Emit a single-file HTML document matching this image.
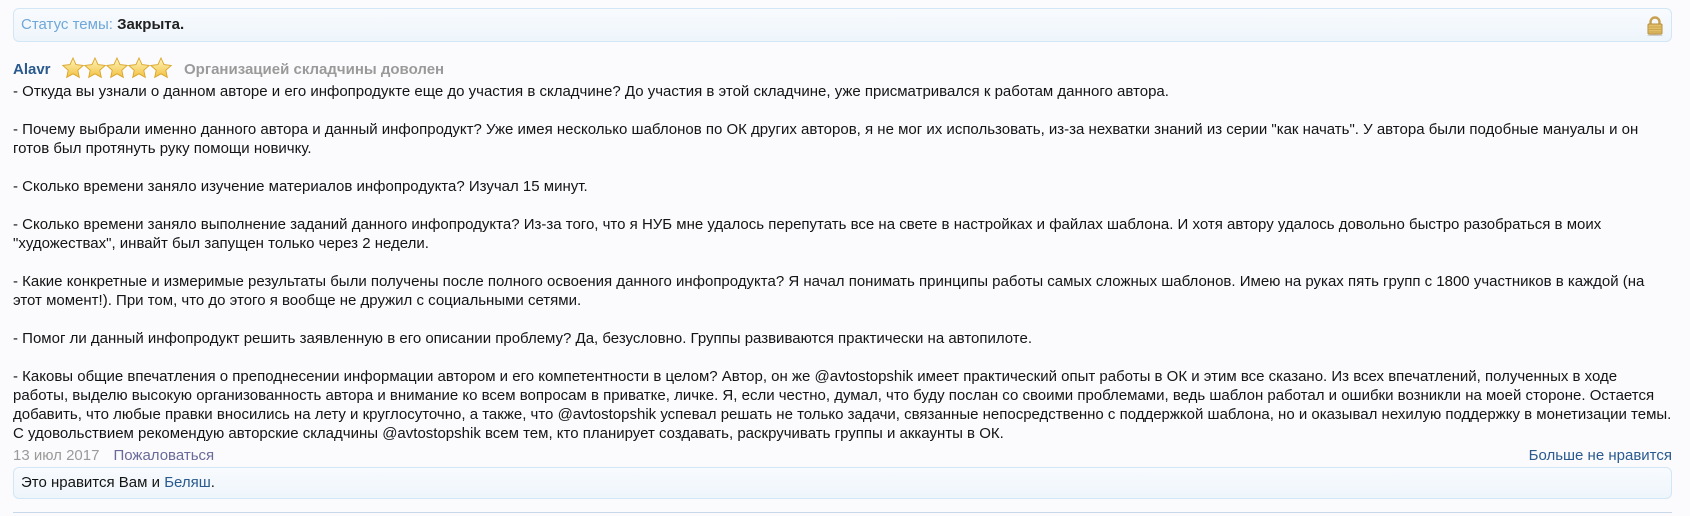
<!DOCTYPE html>
<html><head><meta charset="utf-8"><style>
body{margin:0;background:#fbfbfd;font-family:"Liberation Sans",Arial,sans-serif;font-size:15px;color:#141414;width:1690px;height:516px;overflow:hidden;position:relative}
.status{position:absolute;left:13px;top:8px;width:1659px;height:34px;border:1px solid #d3e6f6;border-radius:6px;background:linear-gradient(#f8fbfe,#eef5fb);box-sizing:border-box}
.status span.l{position:absolute;left:7px;top:7px;color:#6fa7d8}
.status b{color:#222}
.lock{position:absolute;left:1632px;top:7px}
.head{position:absolute;left:13px;top:61px;height:20px;white-space:nowrap}
.name{color:#2a5a8e;font-weight:bold;font-size:15px;position:absolute;left:0;top:0}
.stars{position:absolute;left:49px;top:-5px}
.rt{position:absolute;left:171px;top:0;color:#9a9a9a;font-weight:bold;font-size:15px}
.body{position:absolute;left:13px;top:82px;white-space:nowrap;line-height:19px}
.foot{position:absolute;left:13px;top:447px;color:#9a9a9a;white-space:nowrap}
.foot a{color:#6a6a9a;margin-left:14px}
.unlike{position:absolute;right:18px;top:447px;color:#2a5a8e}
.likes{position:absolute;left:13px;top:467px;width:1659px;height:32px;border:1px solid #d3e6f6;border-radius:6px;background:linear-gradient(#f8fbfe,#eef5fb);box-sizing:border-box}
.likes span{position:absolute;left:7px;top:6px}
.likes a{color:#2a5a8e}
.line{position:absolute;left:13px;top:512px;width:1659px;height:1px;background:#c8d8e8}
</style></head><body>
<div class="status"><span class="l">Статус темы: <b>Закрыта.</b></span>
<svg class="lock" width="18" height="20" viewBox="0 0 18 20"><path d="M4.5 9V6a4.5 4.5 0 0 1 9 0v3" fill="none" stroke="#c9a050" stroke-width="2.4"/><rect x="2" y="8" width="14" height="10" rx="1" fill="#e2c06a" stroke="#b58d3a"/><path d="M3 11h12M3 13.5h12M3 16h12" stroke="#c49a45" stroke-width=".8"/><ellipse cx="9" cy="19.3" rx="8" ry=".8" fill="#ccc"/></svg></div>
<div class="head"><span class="name">Alavr</span>
<svg class="stars" width="112" height="24" viewBox="0 0 112 24"><defs><linearGradient id="g" x1="0" y1="0" x2="0" y2="1"><stop offset="0" stop-color="#fff6c0"/><stop offset="1" stop-color="#f2c040"/></linearGradient><path id="s" d="M11 1l3 6.6 7.2.8-5.4 4.9 1.5 7.1L11 16.8 4.7 20.4l1.5-7.1L.8 8.4 8 7.6z" fill="url(#g)" stroke="#d9a528" stroke-width=".9"/></defs>
<use href="#s" x="0" y="1"/><use href="#s" x="22" y="1"/><use href="#s" x="44" y="1"/><use href="#s" x="66" y="1"/><use href="#s" x="88" y="1"/></svg>
<span class="rt">Организацией складчины доволен</span></div>
<div class="body">- Откуда вы узнали о данном авторе и его инфопродукте еще до участия в складчине? До участия в этой складчине, уже присматривался к работам данного автора.<br><br>- Почему выбрали именно данного автора и данный инфопродукт? Уже имея несколько шаблонов по ОК других авторов, я не мог их использовать, из-за нехватки знаний из серии "как начать". У автора были подобные мануалы и он<br>готов был протянуть руку помощи новичку.<br><br>- Сколько времени заняло изучение материалов инфопродукта? Изучал 15 минут.<br><br>- Сколько времени заняло выполнение заданий данного инфопродукта? Из-за того, что я НУБ мне удалось перепутать все на свете в настройках и файлах шаблона. И хотя автору удалось довольно быстро разобраться в моих<br>"художествах", инвайт был запущен только через 2 недели.<br><br>- Какие конкретные и измеримые результаты были получены после полного освоения данного инфопродукта? Я начал понимать принципы работы самых сложных шаблонов. Имею на руках пять групп с 1800 участников в каждой (на<br>этот момент!). При том, что до этого я вообще не дружил с социальными сетями.<br><br>- Помог ли данный инфопродукт решить заявленную в его описании проблему? Да, безусловно. Группы развиваются практически на автопилоте.<br><br>- Каковы общие впечатления о преподнесении информации автором и его компетентности в целом? Автор, он же @avtostopshik имеет практический опыт работы в ОК и этим все сказано. Из всех впечатлений, полученных в ходе<br>работы, выделю высокую организованность автора и внимание ко всем вопросам в приватке, личке. Я, если честно, думал, что буду послан со своими проблемами, ведь шаблон работал и ошибки возникли на моей стороне. Остается<br>добавить, что любые правки вносились на лету и круглосуточно, а также, что @avtostopshik успевал решать не только задачи, связанные непосредственно с поддержкой шаблона, но и оказывал нехилую поддержку в монетизации темы.<br>С удовольствием рекомендую авторские складчины @avtostopshik всем тем, кто планирует создавать, раскручивать группы и аккаунты в ОК.</div>
<div class="foot">13 июл 2017<a>Пожаловаться</a></div>
<div class="unlike">Больше не нравится</div>
<div class="likes"><span>Это нравится Вам и <a>Беляш</a>.</span></div>
<div class="line"></div>
</body></html>
